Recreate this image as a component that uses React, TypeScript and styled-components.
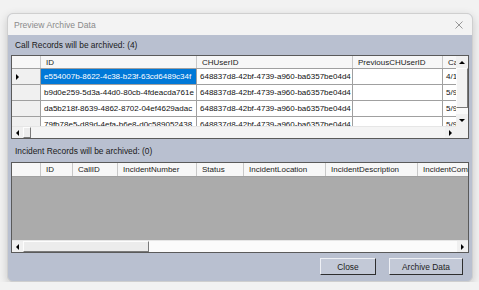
import styled, { createGlobalStyle } from "styled-components";

const GlobalStyle = createGlobalStyle`
  html, body {
    margin: 0;
    padding: 0;
    background: #f2f2f2;
  }
  body {
    font-family: "Liberation Sans", Arial, sans-serif;
  }
`;

const GUID = "648837d8-42bf-4739-a960-ba6357be04d4";

const callColumns = [
  { name: "ID", width: 156 },
  { name: "CHUserID", width: 156 },
  { name: "PreviousCHUserID", width: 90 },
  { name: "CallDate", width: 60 },
];

const callRows = [
  ["e554007b-8622-4c38-b23f-63cd6489c34f", GUID, "", "4/15/2022"],
  ["b9d0e259-5d3a-44d0-80cb-4fdeacda761e", GUID, "", "5/9/2022"],
  ["da5b218f-8639-4862-8702-04ef4629adac", GUID, "", "5/9/2022"],
  ["79fb78e5-d89d-4efa-b6e8-d0c589052438", GUID, "", "5/9/2022"],
];

const incidentColumns = [
  { name: "ID", width: 32 },
  { name: "CallID", width: 45 },
  { name: "IncidentNumber", width: 79 },
  { name: "Status", width: 47 },
  { name: "IncidentLocation", width: 82 },
  { name: "IncidentDescription", width: 92 },
  { name: "IncidentComments", width: 90 },
];

function Arrow({ dir }) {
  return <ArrowGlyph $dir={dir} />;
}

function HScroll({ thumb, trackWhite }) {
  return (
    <HBar>
      <ScrollButton><Arrow dir="left" /></ScrollButton>
      <Thumb style={{ width: thumb }} />
      <Track $white={trackWhite} />
      <ScrollButton><Arrow dir="right" /></ScrollButton>
    </HBar>
  );
}

function VScroll({ thumb }) {
  return (
    <VBar>
      <VButton><Arrow dir="up" /></VButton>
      <VThumb style={{ height: thumb }} />
      <VTrack />
      <VButton><Arrow dir="down" /></VButton>
    </VBar>
  );
}

function CallGrid() {
  return (
    <Frame $height={84} $vscroll>
      <DataArea>
        <HeaderRow>
          <Corner />
          {callColumns.map((c) => (
            <HeaderCell key={c.name} style={{ width: c.width }}>{c.name}</HeaderCell>
          ))}
        </HeaderRow>
        {callRows.map((r, i) => (
          <Row key={i}>
            <RowHeader>{i === 0 && <Arrow dir="right" />}</RowHeader>
            {r.map((v, j) => (
              <Cell key={j} style={{ width: callColumns[j].width }} $selected={i === 0 && j === 0}>
                {v}
              </Cell>
            ))}
          </Row>
        ))}
      </DataArea>
      <VScroll thumb={40} />
      <HScroll thumb={8} />
      <ScrollCorner />
    </Frame>
  );
}

function IncidentGrid() {
  return (
    <Frame $height={91}>
      <DataArea $empty>
        <HeaderRow $tall>
          <Corner />
          {incidentColumns.map((c) => (
            <HeaderCell key={c.name} style={{ width: c.width }}>{c.name}</HeaderCell>
          ))}
        </HeaderRow>
      </DataArea>
      <HScroll thumb={126} trackWhite />
    </Frame>
  );
}

export default function App() {
  return (
    <>
      <GlobalStyle />
      <Window>
        <TitleBar>
          <Title>Preview Archive Data</Title>
          <CloseIcon width="8" height="8" viewBox="0 0 8 8">
            <path d="M0.5 0.5 L7.5 7.5 M7.5 0.5 L0.5 7.5" stroke="#8c8c8c" strokeWidth="0.9" fill="none" />
          </CloseIcon>
        </TitleBar>
        <Body>
          <SectionLabel>Call Records will be archived: (4)</SectionLabel>
          <CallGrid />
          <SectionLabel $tall>Incident Records will be archived: (0)</SectionLabel>
          <IncidentGrid />
          <Footer>
            <DialogButton $width={56}>Close</DialogButton>
            <DialogButton $width={74}>Archive Data</DialogButton>
          </Footer>
        </Body>
      </Window>
    </>
  );
}

const Window = styled.div`
  margin: 13px 0 0 7px;
  width: 466px;
  height: 269px;
  box-sizing: border-box;
  border: 1px solid #cfcfcf;
  border-radius: 6px;
  overflow: hidden;
  background: #b9c0d0;
  box-shadow: 0 3px 10px rgba(0, 0, 0, 0.18);
  display: flex;
  flex-direction: column;
`;

const TitleBar = styled.div`
  height: 21px;
  flex: none;
  background: #f3f3f3;
  display: flex;
  align-items: center;
  justify-content: space-between;
  padding: 0 9px 0 6px;
`;

const Title = styled.span`
  font-size: 8.6px;
  color: #8a8a8a;
`;

const CloseIcon = styled.svg`
  display: block;
`;

const Body = styled.div`
  flex: 1;
  display: flex;
  flex-direction: column;
  padding: 0 3px;
`;

const SectionLabel = styled.div`
  height: ${(p) => (p.$tall ? 23 : 20)}px;
  flex: none;
  display: flex;
  align-items: center;
  padding-left: 4px;
  font-size: 8.4px;
  color: #1a1a1a;
`;

const Frame = styled.div`
  height: ${(p) => p.$height}px;
  flex: none;
  box-sizing: border-box;
  border: 1px solid #5a5a5a;
  display: grid;
  grid-template-columns: 1fr ${(p) => (p.$vscroll ? "12px" : "0px")};
  grid-template-rows: 1fr 12px;
  background: #ababab;
  font-size: 8px;
  color: #111;
`;

const DataArea = styled.div`
  overflow: hidden;
  background: #ababab;
  grid-column: 1 / ${(p) => (p.$empty ? 3 : 2)};
`;

const HeaderRow = styled.div`
  display: flex;
  height: ${(p) => (p.$tall ? 13 : 12)}px;
  background: #f7f7f7;
  border-bottom: 1px solid #a0a0a0;
  white-space: nowrap;
`;

const Corner = styled.div`
  width: 29px;
  flex: none;
  border-right: 1px solid #c8c8c8;
  box-sizing: border-box;
`;

const HeaderCell = styled.div`
  flex: none;
  box-sizing: border-box;
  padding-left: 5px;
  display: flex;
  align-items: center;
  border-right: 1px solid #c8c8c8;
  overflow: hidden;
  color: #222;
`;

const Row = styled.div`
  display: flex;
  height: 15px;
  border-bottom: 1px solid #a0a0a0;
  background: #fff;
  white-space: nowrap;
`;

const RowHeader = styled.div`
  width: 29px;
  flex: none;
  box-sizing: border-box;
  background: #f0f0f0;
  border-right: 1px solid #a0a0a0;
  display: flex;
  align-items: center;
  padding-left: 4px;
`;

const Cell = styled.div`
  flex: none;
  box-sizing: border-box;
  padding-left: 3px;
  display: flex;
  align-items: center;
  overflow: hidden;
  border-right: 1px solid #a0a0a0;
  background: ${(p) => (p.$selected ? "#0078d7" : "#fff")};
  color: ${(p) => (p.$selected ? "#fff" : "#111")};
`;

const HBar = styled.div`
  display: flex;
  grid-column: 1;
  background: #f0f0f0;
  border-top: 1px solid #e6e6e6;
  box-sizing: border-box;
`;

const ScrollButton = styled.div`
  width: 11px;
  flex: none;
  display: flex;
  align-items: center;
  justify-content: center;
  background: #f0f0f0;
`;

const Thumb = styled.div`
  flex: none;
  box-sizing: border-box;
  background: #ececec;
  border: 1px solid;
  border-color: #fdfdfd #7a7a7a #7a7a7a #fdfdfd;
`;

const Track = styled.div`
  flex: 1;
  background: ${(p) => (p.$white ? "#fbfbfb" : "#f4f4f4")};
`;

const VBar = styled.div`
  display: flex;
  flex-direction: column;
  grid-column: 2;
  grid-row: 1;
  background: #f0f0f0;
`;

const VButton = styled.div`
  height: 12px;
  flex: none;
  display: flex;
  align-items: center;
  justify-content: center;
`;

const VThumb = styled.div`
  flex: none;
  box-sizing: border-box;
  background: #f3f3f3;
  border: 1px solid;
  border-color: #fdfdfd #7a7a7a #7a7a7a #fdfdfd;
`;

const VTrack = styled.div`
  flex: 1;
  background: #fafafa;
`;

const ScrollCorner = styled.div`
  background: #f0f0f0;
`;

const ArrowGlyph = styled.span`
  width: 0;
  height: 0;
  border-style: solid;
  border-color: transparent;
  ${(p) =>
    p.$dir === "left"
      ? "border-width: 3px 3px 3px 0; border-right-color: #000;"
      : p.$dir === "right"
      ? "border-width: 3px 0 3px 3px; border-left-color: #000;"
      : p.$dir === "up"
      ? "border-width: 0 3px 3px 3px; border-bottom-color: #000;"
      : "border-width: 3px 3px 0 3px; border-top-color: #000;"}
`;

const Footer = styled.div`
  display: flex;
  justify-content: flex-end;
  gap: 13px;
  padding: 5px 6px 0 0;
`;

const DialogButton = styled.button`
  width: ${(p) => p.$width}px;
  height: 17px;
  padding: 0;
  box-sizing: border-box;
  font-family: "Liberation Sans", Arial, sans-serif;
  font-size: 8.4px;
  color: #222;
  background: #c3c9d7;
  border: 1px solid;
  border-color: #eef0f5 #2e2e2e #2e2e2e #eef0f5;
  border-radius: 0;
`;
